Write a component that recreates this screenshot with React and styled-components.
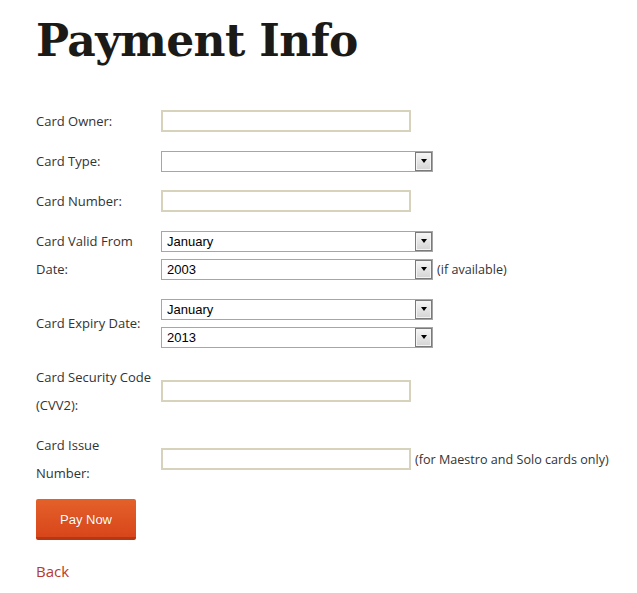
import React from 'react'
import styled, {createGlobalStyle} from 'styled-components'

const Global = createGlobalStyle`
  html, body { margin:0; padding:0; background:#fff; }
  body { font-family:"Open Sans", sans-serif; color:#333; }
`

const Page = styled.div`
  padding:18px 0 0 36px;
`

const Title = styled.h1`
  margin:0 0 37px;
  font-family:"DejaVu Serif", serif;
  font-weight:bold;
  font-size:44px;
  line-height:46px;
  letter-spacing:-0.6px;
  color:#1b1a17;
`

const Form = styled.div`
  display:grid;
  grid-template-columns:125px auto;
  width:max-content;
`

const Label = styled.div`
  padding:6px 0;
  font-size:13px;
  line-height:28px;
  display:flex;
  align-items:center;
`

const Field = styled.div`
  padding:6px 0;
  display:flex;
  flex-direction:column;
  justify-content:center;
`

const Line = styled.div`
  height:28px;
  display:flex;
  align-items:center;
`

const TextInput = styled.input`
  box-sizing:border-box;
  width:250px;
  height:22px;
  border:2px solid #d6d2bc;
  padding:0 4px;
  margin:0;
  outline:none;
  font:13px "Liberation Sans", Arial, sans-serif;
`

const SelectBox = styled.div`
  box-sizing:border-box;
  width:272px;
  height:21px;
  border:1px solid #a6a6a6;
  display:flex;
  background:#fff;
`

const SelectValue = styled.div`
  flex:1;
  padding-left:5px;
  font:13px/19px "Liberation Sans", Arial, sans-serif;
  color:#000;
`

const Arrow = styled.div`
  box-sizing:border-box;
  width:17px;
  height:19px;
  border:1px solid #7a7a7a;
  box-shadow:inset 0 0 0 1px #f4f4f4;
  background:linear-gradient(#f6f6f6, #d4d4d4);
  display:flex;
  align-items:center;
  justify-content:center;
  &::after{
    content:"";
    border-left:3.5px solid transparent;
    border-right:3.5px solid transparent;
    border-top:4px solid #000;
  }
`

const Note = styled.span`
  margin-left:4px;
  font-size:12.6px;
`

const PayButton = styled.button`
  margin-top:6px;
  width:100px;
  height:41px;
  padding-top:4px;
  border:none;
  border-bottom:3px solid #b93612;
  border-radius:2px;
  background:linear-gradient(#e4612a, #d8461b);
  color:#fff;
  font:13px "Liberation Sans", Arial, sans-serif;
  text-shadow:0 0 1px rgba(120,30,0,0.4);
  cursor:pointer;
`

const BackLink = styled.a`
  display:block;
  margin-top:21px;
  font-size:15px;
  line-height:20px;
  color:#b8392b;
  text-decoration:none;
`

function Select({value}) {
  return (
    <SelectBox>
      <SelectValue>{value}</SelectValue>
      <Arrow />
    </SelectBox>
  )
}

export default function App() {
  return (
    <Page>
      <Global />
      <Title>Payment Info</Title>
      <Form>
        <Label>Card Owner:</Label>
        <Field><Line><TextInput /></Line></Field>

        <Label>Card Type:</Label>
        <Field><Line><Select value="" /></Line></Field>

        <Label>Card Number:</Label>
        <Field><Line><TextInput /></Line></Field>

        <Label>Card Valid From<br />Date:</Label>
        <Field>
          <Line><Select value="January" /></Line>
          <Line><Select value="2003" /><Note>(if available)</Note></Line>
        </Field>

        <Label>Card Expiry Date:</Label>
        <Field>
          <Line><Select value="January" /></Line>
          <Line><Select value="2013" /></Line>
        </Field>

        <Label>Card Security Code<br />(CVV2):</Label>
        <Field><Line><TextInput /></Line></Field>

        <Label>Card Issue<br />Number:</Label>
        <Field><Line><TextInput /><Note>(for Maestro and Solo cards only)</Note></Line></Field>
      </Form>
      <PayButton>Pay Now</PayButton>
      <BackLink href="#">Back</BackLink>
    </Page>
  )
}
